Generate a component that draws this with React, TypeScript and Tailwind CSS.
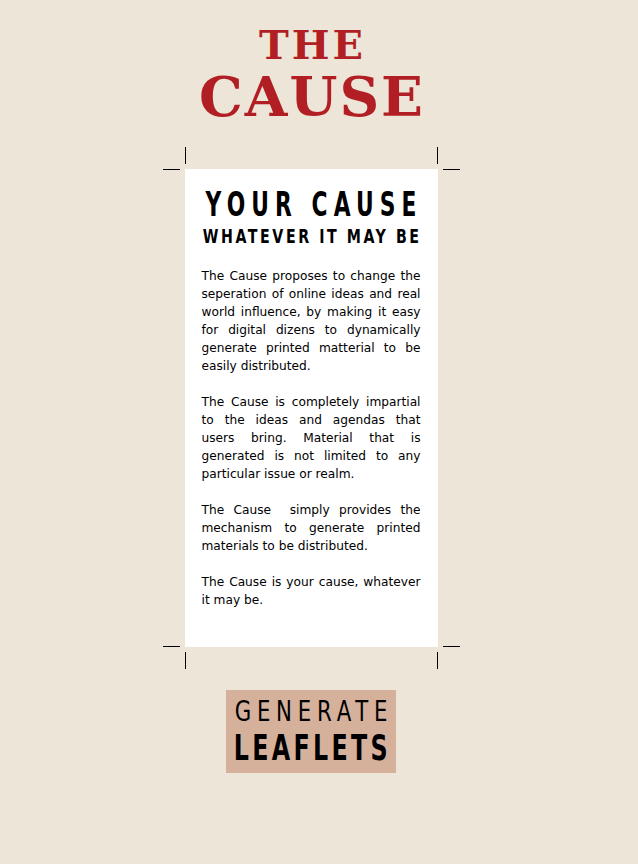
export default function App() {
  return (
    <div className="min-h-screen bg-[#ede5d7]">
      <div className="w-[622px] flex flex-col items-center pt-[25px]">
        <h1 className="flex flex-col items-center font-bold text-[#b11f24] font-['DejaVu_Serif',serif]">
          <span className="text-[40px] leading-[40px] tracking-[3px] pl-[3px]">THE</span>
          <span className="mt-[2px] text-[55px] leading-[60px] tracking-[2px] pl-[2px]">CAUSE</span>
        </h1>

        <div className="relative mt-[42px] w-[253px] h-[478px] bg-white pt-[20px] pl-[17px] pr-[17px]">
          <span className="absolute left-0 -top-[22px] w-px h-[17px] bg-black" />
          <span className="absolute -left-[22px] top-0 w-[17px] h-px bg-black" />
          <span className="absolute right-0 -top-[22px] w-px h-[17px] bg-black" />
          <span className="absolute -right-[22px] top-0 w-[17px] h-px bg-black" />
          <span className="absolute left-0 -bottom-[22px] w-px h-[17px] bg-black" />
          <span className="absolute -left-[22px] bottom-0 w-[17px] h-px bg-black" />
          <span className="absolute right-0 -bottom-[22px] w-px h-[17px] bg-black" />
          <span className="absolute -right-[22px] bottom-0 w-[17px] h-px bg-black" />

          <div className="flex flex-col items-center whitespace-nowrap text-black font-bold font-['DejaVu_Sans',sans-serif]">
            <h2 className="scale-x-[0.66] text-[33px] leading-[32px] tracking-[0.28em] pl-[0.28em]">YOUR CAUSE</h2>
            <h3 className="mt-[5px] scale-x-[0.71] text-[20px] leading-[20px] tracking-[0.18em] pl-[0.18em]">WHATEVER IT MAY BE</h3>
          </div>

          <div className="mt-[21px] flex flex-col gap-[18px] text-[12.2px] leading-[18px] text-black text-justify font-['DejaVu_Sans',sans-serif]">
            <p>
              The Cause proposes to change the seperation of online ideas and real world influence, by making it easy for digital dizens to dynamically generate printed matterial to be easily distributed.
            </p>
            <p>
              The Cause is completely impartial to the ideas and agendas that users bring. Material that is generated is not limited to any particular issue or realm.
            </p>
            <p>
              The Cause&nbsp; simply provides the mechanism to generate printed materials to be distributed.
            </p>
            <p>The Cause is your cause, whatever it may be.</p>
          </div>
        </div>

        <button className="mt-[43px] w-[170px] h-[83px] bg-[#d5b19c] flex flex-col items-center justify-center whitespace-nowrap text-black font-['DejaVu_Sans',sans-serif]">
          <span className="scale-x-[0.76] text-[28px] leading-[32px] tracking-[0.27em] pl-[0.27em]">GENERATE</span>
          <span className="scale-x-[0.66] text-[36px] leading-[40px] font-bold tracking-[0.14em] pl-[0.14em]">LEAFLETS</span>
        </button>
      </div>
    </div>
  );
}
